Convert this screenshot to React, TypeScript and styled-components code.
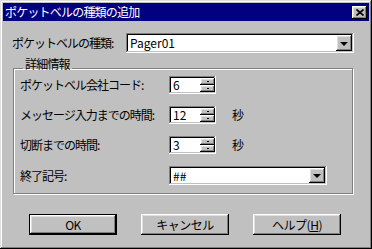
import React from "react";
import styled, { createGlobalStyle, css } from "styled-components";

const GlobalStyle = createGlobalStyle`
  html, body {
    margin: 0;
    padding: 0;
    background: #c0c0c0;
  }
  * {
    box-sizing: border-box;
  }
`;

const raised = css`
  background: #c0c0c0;
  box-shadow: inset -1px -1px #000000, inset 1px 1px #ffffff,
    inset -2px -2px #808080, inset 2px 2px #dfdfdf;
`;

const sunken = css`
  background: #ffffff;
  box-shadow: inset -1px -1px #ffffff, inset 1px 1px #808080,
    inset -2px -2px #c0c0c0, inset 2px 2px #000000;
`;

function App() {
  return (
    <>
      <GlobalStyle />
      <Window>
        <TitleBar>
          <Title>ポケットベルの種類の追加</Title>
          <CloseButton>
            <svg width="8" height="7" viewBox="0 0 8 7">
              <path d="M0.5 0.5L7.5 6.5M7.5 0.5L0.5 6.5" stroke="#000" strokeWidth="1.6" />
            </svg>
          </CloseButton>
        </TitleBar>
        <Body>
          <TopRow>
            <Label width={114}>ポケットベルの種類:</Label>
            <ComboBox width={228} height={20}>
              <FieldText>Pager01</FieldText>
              <DropButton>
                <DownArrow />
              </DropButton>
            </ComboBox>
          </TopRow>

          <GroupBox>
            <Legend>詳細情報</Legend>
            <FieldGrid>
              <Label>ポケットベル会社コード:</Label>
              <SpinBox>
                <FieldText>6</FieldText>
                <SpinButtons>
                  <SpinButton><Dot /></SpinButton>
                  <SpinButton><Dot /></SpinButton>
                </SpinButtons>
              </SpinBox>
              <Unit />

              <Label>メッセージ入力までの時間:</Label>
              <SpinBox>
                <FieldText>12</FieldText>
                <SpinButtons>
                  <SpinButton><Dot /></SpinButton>
                  <SpinButton><Dot /></SpinButton>
                </SpinButtons>
              </SpinBox>
              <Unit>秒</Unit>

              <Label>切断までの時間:</Label>
              <SpinBox>
                <FieldText>3</FieldText>
                <SpinButtons>
                  <SpinButton><Dot /></SpinButton>
                  <SpinButton><Dot /></SpinButton>
                </SpinButtons>
              </SpinBox>
              <Unit>秒</Unit>

              <Label>終了記号:</Label>
              <ComboBox width={158} height={19} wide>
                <FieldText>##</FieldText>
                <DropButton small>
                  <DownArrow />
                </DropButton>
              </ComboBox>
            </FieldGrid>
          </GroupBox>

          <ButtonRow>
            <Button isDefault>OK</Button>
            <Button>キャンセル</Button>
            <Button>
              ヘルプ(<u>H</u>)
            </Button>
          </ButtonRow>
        </Body>
      </Window>
    </>
  );
}

const Window = styled.div`
  width: 372px;
  height: 249px;
  padding: 3px;
  display: flex;
  flex-direction: column;
  background: #c0c0c0;
  box-shadow: inset -1px -1px #000000, inset 1px 1px #dfdfdf,
    inset -2px -2px #808080, inset 2px 2px #ffffff;
  font-family: "Noto Sans CJK JP", "Liberation Sans", sans-serif;
  font-size: 12px;
  color: #000000;
`;

const TitleBar = styled.div`
  display: flex;
  align-items: center;
  justify-content: space-between;
  height: 18px;
  padding: 0 2px 0 2px;
  background: #000080;
`;

const Title = styled.div`
  color: #ffffff;
  font-size: 12px;
  letter-spacing: -0.8px;
  line-height: 18px;
  white-space: nowrap;
`;

const CloseButton = styled.div`
  ${raised};
  display: flex;
  align-items: center;
  justify-content: center;
  width: 15px;
  height: 13px;
  padding-top: 1px;
`;

const Body = styled.div`
  display: flex;
  flex-direction: column;
  padding: 12px 0 0 9px;
`;

const TopRow = styled.div`
  display: flex;
  align-items: center;
`;

const Label = styled.div<{ width?: number }>`
  width: ${(p) => (p.width ? `${p.width}px` : "auto")};
  letter-spacing: -1px;
  white-space: nowrap;
  line-height: 14px;
`;

const ComboBox = styled.div<{ width: number; height: number; wide?: boolean }>`
  ${sunken};
  display: flex;
  align-items: center;
  justify-content: space-between;
  width: ${(p) => p.width}px;
  height: ${(p) => p.height}px;
  padding: 2px;
  grid-column: ${(p) => (p.wide ? "2 / span 2" : "auto")};
`;

const FieldText = styled.span`
  padding-left: 2px;
  font-size: 12px;
  line-height: 14px;
  white-space: nowrap;
`;

const DropButton = styled.div<{ small?: boolean }>`
  ${raised};
  display: flex;
  align-items: center;
  justify-content: center;
  width: 16px;
  height: ${(p) => (p.small ? 15 : 16)}px;
`;

const DownArrow = styled.div`
  width: 0;
  height: 0;
  border-left: 4px solid transparent;
  border-right: 4px solid transparent;
  border-top: 4px solid #000000;
  margin-top: 1px;
`;

const GroupBox = styled.fieldset`
  margin: 4px 0 0 1px;
  width: 340px;
  padding: 0 0 8px 6px;
  border: 1px solid #808080;
  box-shadow: inset 1px 1px #ffffff, 1px 1px #ffffff;
`;

const Legend = styled.legend`
  margin-left: 3px;
  padding: 0 2px 8px 2px;
  letter-spacing: -0.8px;
  line-height: 14px;
  background: transparent;
`;

const FieldGrid = styled.div`
  display: grid;
  grid-template-columns: 149px 47px auto;
  row-gap: 12px;
  align-items: center;
  margin-top: -3px;
`;

const SpinBox = styled.div`
  ${sunken};
  display: flex;
  align-items: center;
  justify-content: space-between;
  width: 47px;
  height: 18px;
  padding: 2px 1px 2px 2px;
`;

const SpinButtons = styled.div`
  display: flex;
  flex-direction: column;
  width: 15px;
  height: 14px;
`;

const SpinButton = styled.div`
  ${raised};
  flex: 1;
  display: flex;
  align-items: center;
  justify-content: center;
`;

const Dot = styled.div`
  width: 2px;
  height: 1px;
  background: #000000;
`;

const Unit = styled.div`
  padding-left: 16px;
  line-height: 14px;
`;

const ButtonRow = styled.div`
  display: flex;
  gap: 24px;
  margin-top: 20px;
  padding-left: 17px;
`;

const Button = styled.div<{ isDefault?: boolean }>`
  ${raised};
  display: flex;
  align-items: center;
  justify-content: center;
  width: 88px;
  height: 21px;
  letter-spacing: -0.5px;
  white-space: nowrap;
  ${(p) =>
    p.isDefault &&
    css`
      box-shadow: inset 0 0 0 1px #000000, inset -2px -2px #000000,
        inset 2px 2px #ffffff, inset -3px -3px #808080, inset 3px 3px #dfdfdf;
    `}
`;

export default App;
